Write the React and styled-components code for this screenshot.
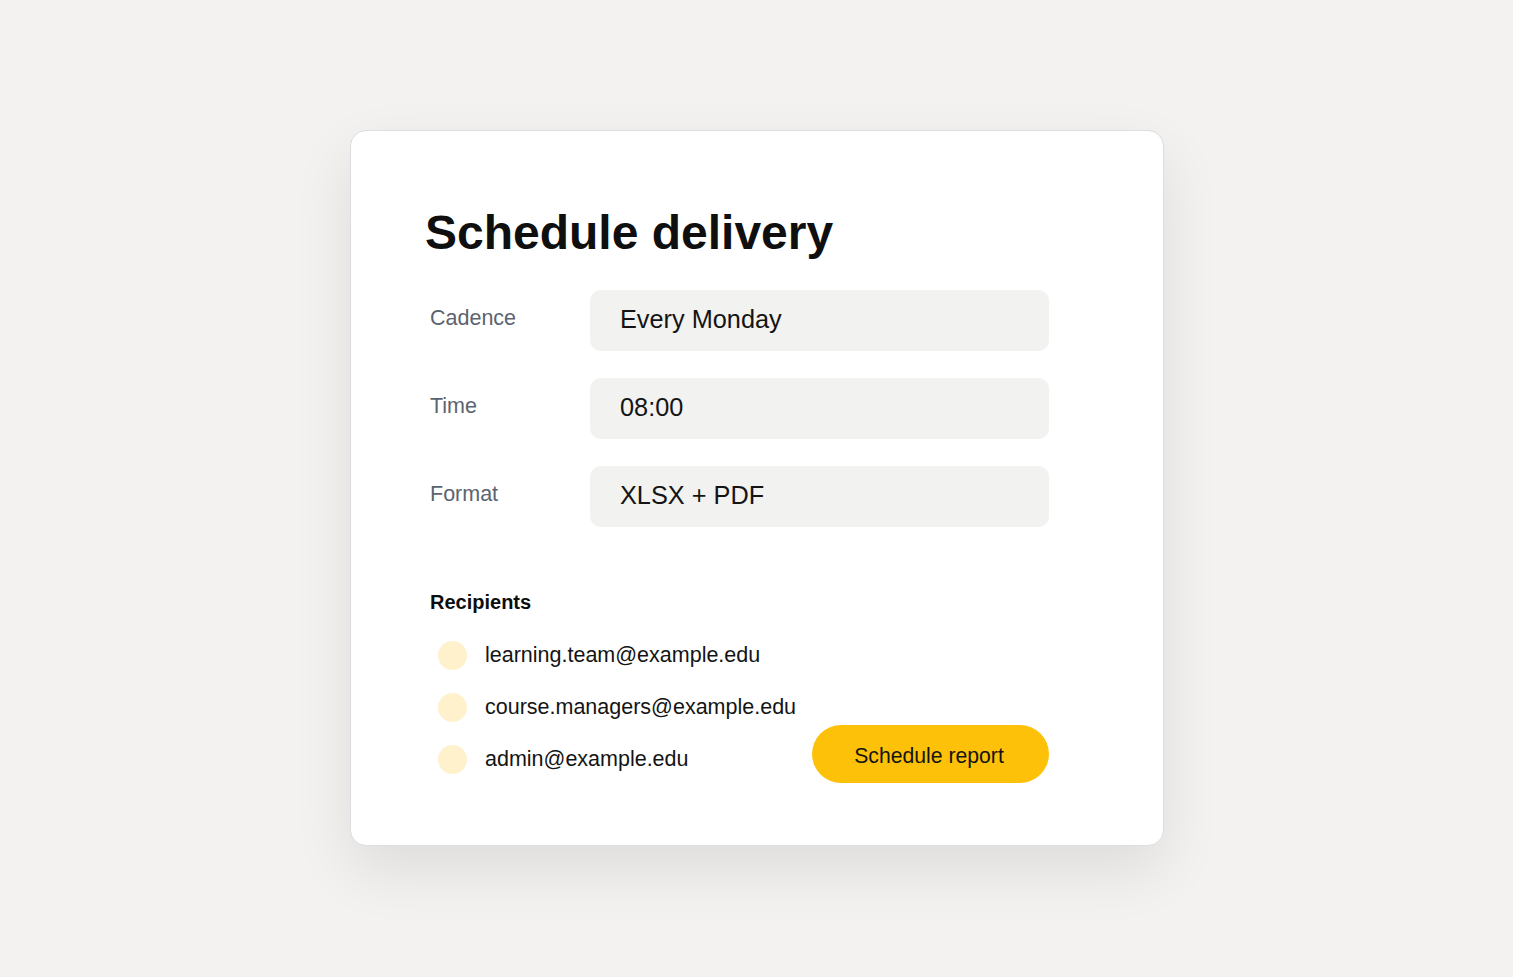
import React from 'react';
import styled, {createGlobalStyle} from 'styled-components';

const GlobalStyle = createGlobalStyle`
  html, body {
    margin: 0;
    padding: 0;
    background: #f3f2f0;
    font-family: "Liberation Sans", Arial, sans-serif;
    color: #111;
  }
`;

const fields = [
    {label: 'Cadence', value: 'Every Monday'},
    {label: 'Time', value: '08:00'},
    {label: 'Format', value: 'XLSX + PDF'},
];

const recipients = [
    'learning.team@example.edu',
    'course.managers@example.edu',
    'admin@example.edu',
];

const Page = styled.div`
  min-height: 977px;
  display: flex;
  justify-content: center;
  align-items: flex-start;
  padding-top: 130px;
  box-sizing: border-box;
`;

const Card = styled.section`
  width: 814px;
  box-sizing: border-box;
  background: #fff;
  border: 1px solid #dcdde0;
  border-radius: 16px;
  box-shadow: 0 24px 60px rgba(0, 0, 0, 0.09);
  padding: 73px 114px 71px 74px;
  margin-left: 1px;
`;

const Title = styled.h1`
  margin: 0 0 28px;
  font-size: 48px;
  line-height: 1.2;
  font-weight: 700;
  color: #0f0f10;
`;

const Form = styled.div`
  display: flex;
  flex-direction: column;
  gap: 27px;
  padding-left: 5px;
`;

const Row = styled.div`
  display: grid;
  grid-template-columns: 160px 459px;
  align-items: start;
`;

const Label = styled.span`
  padding-top: 16px;
  font-size: 21.5px;
  color: #5c6370;
`;

const Field = styled.div`
  height: 61px;
  box-sizing: border-box;
  display: flex;
  align-items: center;
  padding: 0 30px 1px;
  background: #f2f2f0;
  border-radius: 11px;
  font-size: 25.3px;
  color: #141414;
`;

const Recipients = styled.div`
  margin-top: 64px;
  padding-left: 5px;
  display: flex;
  justify-content: space-between;
  align-items: flex-end;
  width: 619px;
`;

const Heading = styled.h2`
  margin: 0 0 27px;
  font-size: 20px;
  font-weight: 700;
  color: #0d0d0d;
`;

const List = styled.ul`
  list-style: none;
  margin: 0;
  padding: 0 0 0 8px;
  display: flex;
  flex-direction: column;
  gap: 23px;
`;

const Item = styled.li`
  display: flex;
  align-items: center;
  gap: 18px;
  font-size: 21.5px;
  color: #141414;
`;

const Dot = styled.span`
  width: 29px;
  height: 29px;
  border-radius: 50%;
  background: #fff1cc;
  flex-shrink: 0;
`;

const Button = styled.button`
  width: 237px;
  height: 58px;
  margin-bottom: -9px;
  padding: 4px 3px 0 0;
  border: none;
  border-radius: 29px;
  background: #fdc109;
  font-family: inherit;
  font-size: 21.2px;
  color: #141414;
  cursor: pointer;
`;

const App = () => {
    return (
        <>
            <GlobalStyle/>
            <Page>
                <Card>
                    <Title>Schedule delivery</Title>
                    <Form>
                        {fields.map((f) => (
                            <Row key={f.label}>
                                <Label>{f.label}</Label>
                                <Field>{f.value}</Field>
                            </Row>
                        ))}
                    </Form>
                    <Recipients>
                        <div>
                            <Heading>Recipients</Heading>
                            <List>
                                {recipients.map((r) => (
                                    <Item key={r}>
                                        <Dot/>
                                        {r}
                                    </Item>
                                ))}
                            </List>
                        </div>
                        <Button>Schedule report</Button>
                    </Recipients>
                </Card>
            </Page>
        </>
    );
};

export default App;
